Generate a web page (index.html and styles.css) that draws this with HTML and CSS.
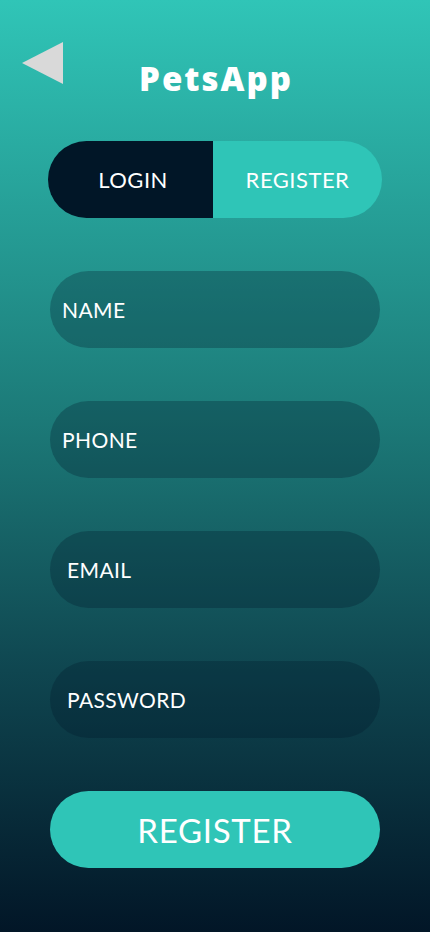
FILE: index.html
```html
<!DOCTYPE html>
<html lang="en">
<head>
<meta charset="utf-8">
<title>PetsApp</title>
<link rel="stylesheet" href="styles.css">
</head>
<body>
<div class="screen">
  <header class="top">
    <button class="back" aria-label="Back">
      <svg width="41" height="42" viewBox="0 0 41 42"><polygon points="41,0 41,42 0,21" fill="#d9d9d9"/></svg>
    </button>
    <h1 class="title">PetsApp</h1>
    <span></span>
  </header>
  <main class="form">
    <div class="toggle">
      <div class="tab tab-dark">LOGIN</div>
      <div class="tab tab-active">REGISTER</div>
    </div>
    <div class="field field-a">NAME</div>
    <div class="field field-a">PHONE</div>
    <div class="field field-b">EMAIL</div>
    <div class="field field-b">PASSWORD</div>
    <button class="submit">REGISTER</button>
  </main>
</div>
</body>
</html>
```
FILE: styles.css
```css
* { box-sizing: border-box; }
html, body { margin: 0; padding: 0; }
body {
  font-family: "Lato", "Open Sans", sans-serif;
  color: #ffffff;
}
.screen {
  width: 430px;
  height: 932px;
  background: linear-gradient(180deg, #30c5b7 0%, #1c7a78 45%, #0f4650 72%, #021627 100%);
  display: flex;
  flex-direction: column;
}
.top {
  display: grid;
  grid-template-columns: 1fr auto 1fr;
  align-items: start;
  padding: 42px 22px 0 22px;
  height: 141px;
}
.back {
  border: 0;
  background: none;
  padding: 0;
  width: 41px;
  height: 42px;
  display: block;
}
.back svg { display: block; }
.title {
  margin: 15px 0 0 0;
  font-family: "Open Sans", "Lato", sans-serif;
  font-size: 33px;
  font-weight: 800;
  line-height: 44px;
  letter-spacing: 2px;
  text-indent: 2px;
}
.form {
  display: flex;
  flex-direction: column;
  gap: 53px;
  padding: 0 50px;
}
.toggle {
  margin: 0 -2px;
  height: 77px;
  border-radius: 39px;
  overflow: hidden;
  display: grid;
  grid-template-columns: 165px 1fr;
}
.tab {
  display: flex;
  align-items: center;
  justify-content: center;
  font-size: 22px;
  font-weight: 400;
  letter-spacing: 0.5px;
}
.tab-dark { background: #011627; padding-left: 5px; }
.tab-active { background: #2fc5b7; }
.field {
  height: 77px;
  border-radius: 39px;
  display: flex;
  align-items: center;
  font-size: 21px;
  font-weight: 400;
  letter-spacing: 0.4px;
  background: rgba(1, 22, 39, 0.28);
}
.field-a { padding-left: 12px; }
.field-b { padding-left: 17px; }
.submit {
  height: 77px;
  border: 0;
  border-radius: 39px;
  background: #2fc5b7;
  color: #ffffff;
  font-family: "Lato", "Open Sans", sans-serif;
  font-size: 33px;
  font-weight: 400;
  letter-spacing: 0.7px;
  padding: 0;
}
```
